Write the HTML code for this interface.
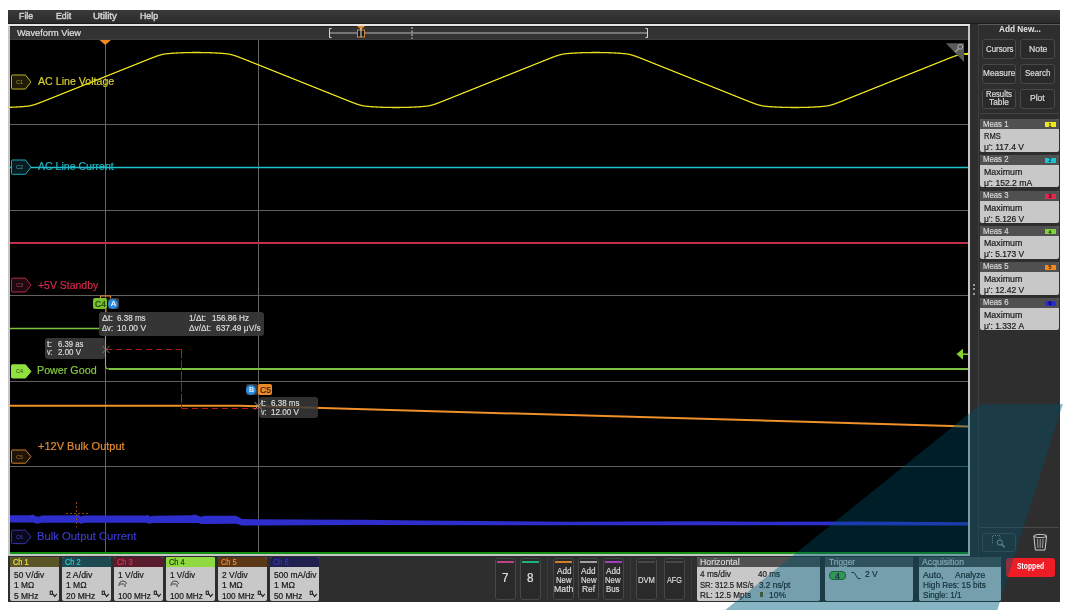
<!DOCTYPE html><html><head><meta charset="utf-8"><style>
html,body{margin:0;padding:0;}
body{width:1069px;height:610px;overflow:hidden;position:relative;background:#fff;font-family:"Liberation Sans", sans-serif;}
.a{position:absolute;}
.t{position:absolute;white-space:nowrap;line-height:1.117;transform-origin:0 0;}
.r{position:absolute;box-sizing:border-box;}
</style></head><body>

<div class="r" style="left:8px;top:10px;width:1052px;height:592px;background:#2e2e2e;"></div>
<div class="r" style="left:8px;top:10px;width:1052px;height:13px;background:linear-gradient(#3a3a3a,#2b2b2b);"></div>
<div class="r" style="left:8px;top:23px;width:1052px;height:1px;background:#1c1c1c;"></div>
<div class="t" id="t1" style="left:19.00px;top:10.88px;font-size:9.75px;color:#d4d4d4;font-weight:400;transform:scaleX(0.9034);-webkit-text-stroke:0.45px #d4d4d4;">File</div>
<div class="t" id="t2" style="left:55.60px;top:10.88px;font-size:9.75px;color:#d4d4d4;font-weight:400;transform:scaleX(0.8981);-webkit-text-stroke:0.45px #d4d4d4;">Edit</div>
<div class="t" id="t3" style="left:93.40px;top:10.88px;font-size:9.75px;color:#d4d4d4;font-weight:400;transform:scaleX(1.0066);-webkit-text-stroke:0.45px #d4d4d4;">Utility</div>
<div class="t" id="t4" style="left:140.30px;top:10.88px;font-size:9.75px;color:#d4d4d4;font-weight:400;transform:scaleX(0.8972);-webkit-text-stroke:0.45px #d4d4d4;">Help</div>
<div class="r" style="left:8px;top:24px;width:962px;height:532px;background:#c6c6c6;"></div>
<div class="r" style="left:8px;top:24px;width:962px;height:2px;background:#e4e4e4;"></div>
<div class="r" style="left:10px;top:26px;width:958px;height:14px;background:#333333;"></div>
<div class="r" style="left:10px;top:26px;width:958px;height:1px;background:#202020;"></div>
<div class="r" style="left:10px;top:39px;width:958px;height:1px;background:#3c3c3c;"></div>
<div class="t" id="t5" style="left:16.80px;top:27.19px;font-size:9.96px;color:#e0e0e0;font-weight:400;transform:scaleX(0.9256);-webkit-text-stroke:0.2px #e0e0e0;">Waveform View</div>
<div class="r" style="left:10px;top:40px;width:958px;height:512px;background:#000;"></div>
<div class="r" style="left:10px;top:552px;width:958px;height:2px;background:#138f13;"></div>
<svg class="a" style="left:0;top:0" width="1069" height="610" viewBox="0 0 1069 610">
<line x1="330" y1="33" x2="647" y2="33" stroke="#8c8c8c" stroke-width="1.6"/>
<path d="M331.5,28.5 L329.5,28.5 L329.5,37.5 L331.5,37.5" fill="none" stroke="#d8d8d8" stroke-width="1"/>
<path d="M645.5,28.5 L647.5,28.5 L647.5,37.5 L645.5,37.5" fill="none" stroke="#d8d8d8" stroke-width="1"/>
<line x1="412" y1="27" x2="412" y2="39" stroke="#d0d0d0" stroke-width="1" stroke-dasharray="2,1.5"/>
<path d="M357,26 L365,26 L361,29.5 Z" fill="#f08a22"/>
<rect x="357.5" y="30" width="7" height="7" fill="#1a1a1a" stroke="#d08a40" stroke-width="1"/>
<line x1="361" y1="28" x2="361" y2="37" stroke="#e0e0e0" stroke-width="1"/>
<line x1="10" y1="124.5" x2="968" y2="124.5" stroke="#606060" stroke-width="1"/>
<line x1="10" y1="210.5" x2="968" y2="210.5" stroke="#606060" stroke-width="1"/>
<line x1="10" y1="295.5" x2="968" y2="295.5" stroke="#606060" stroke-width="1"/>
<line x1="10" y1="381.5" x2="968" y2="381.5" stroke="#606060" stroke-width="1"/>
<line x1="10" y1="466.5" x2="968" y2="466.5" stroke="#606060" stroke-width="1"/>
<line x1="105.5" y1="40" x2="105.5" y2="552" stroke="#646464" stroke-width="1"/>
<line x1="258.5" y1="40" x2="258.5" y2="552" stroke="#646464" stroke-width="1"/>
<path d="M99.5,40 L111,40 L105.2,45 Z" fill="#f08a22"/>
<path d="M10.0,107.28 L10.5,107.26 L11.0,107.24 L11.5,107.23 L12.0,107.21 L12.5,107.19 L13.0,107.17 L13.5,107.14 L14.0,107.12 L14.5,107.10 L15.0,107.08 L15.5,107.05 L16.0,107.03 L16.5,107.00 L17.0,106.98 L17.5,106.95 L18.0,106.92 L18.5,106.89 L19.0,106.86 L19.5,106.83 L20.0,106.80 L20.5,106.77 L21.0,106.74 L21.5,106.70 L22.0,106.67 L22.5,106.63 L23.0,106.60 L23.5,106.56 L24.0,106.52 L24.5,106.47 L25.0,106.43 L25.5,106.38 L26.0,106.33 L26.5,106.28 L27.0,106.22 L27.5,106.16 L28.0,106.09 L28.5,106.02 L29.0,105.95 L29.5,105.86 L30.0,105.78 L30.5,105.68 L31.0,105.58 L31.5,105.46 L32.0,105.35 L32.5,105.22 L33.0,105.08 L33.5,104.94 L34.0,104.79 L34.5,104.64 L35.0,104.48 L35.5,104.31 L36.0,104.14 L36.5,103.97 L37.0,103.79 L37.5,103.61 L38.0,103.42 L38.5,103.23 L39.0,103.04 L39.5,102.85 L40.0,102.66 L40.5,102.47 L41.0,102.27 L41.5,102.08 L42.0,101.88 L42.5,101.68 L43.0,101.49 L43.5,101.29 L44.0,101.09 L44.5,100.89 L45.0,100.69 L45.5,100.49 L46.0,100.30 L46.5,100.10 L47.0,99.90 L47.5,99.70 L48.0,99.50 L48.5,99.30 L49.0,99.10 L49.5,98.90 L50.0,98.70 L50.5,98.50 L51.0,98.30 L51.5,98.10 L52.0,97.90 L52.5,97.70 L53.0,97.50 L53.5,97.30 L54.0,97.10 L54.5,96.90 L55.0,96.70 L55.5,96.50 L56.0,96.30 L56.5,96.10 L57.0,95.90 L57.5,95.70 L58.0,95.50 L58.5,95.30 L59.0,95.10 L59.5,94.90 L60.0,94.70 L60.5,94.50 L61.0,94.30 L61.5,94.10 L62.0,93.90 L62.5,93.70 L63.0,93.50 L63.5,93.30 L64.0,93.10 L64.5,92.90 L65.0,92.70 L65.5,92.50 L66.0,92.30 L66.5,92.10 L67.0,91.90 L67.5,91.70 L68.0,91.50 L68.5,91.30 L69.0,91.10 L69.5,90.90 L70.0,90.70 L70.5,90.50 L71.0,90.30 L71.5,90.10 L72.0,89.90 L72.5,89.70 L73.0,89.50 L73.5,89.30 L74.0,89.10 L74.5,88.90 L75.0,88.70 L75.5,88.50 L76.0,88.30 L76.5,88.10 L77.0,87.90 L77.5,87.70 L78.0,87.50 L78.5,87.30 L79.0,87.10 L79.5,86.90 L80.0,86.70 L80.5,86.50 L81.0,86.30 L81.5,86.10 L82.0,85.90 L82.5,85.70 L83.0,85.50 L83.5,85.30 L84.0,85.10 L84.5,84.90 L85.0,84.70 L85.5,84.50 L86.0,84.30 L86.5,84.10 L87.0,83.90 L87.5,83.70 L88.0,83.50 L88.5,83.30 L89.0,83.10 L89.5,82.90 L90.0,82.70 L90.5,82.50 L91.0,82.30 L91.5,82.10 L92.0,81.90 L92.5,81.70 L93.0,81.50 L93.5,81.30 L94.0,81.10 L94.5,80.90 L95.0,80.70 L95.5,80.50 L96.0,80.30 L96.5,80.10 L97.0,79.90 L97.5,79.70 L98.0,79.50 L98.5,79.30 L99.0,79.10 L99.5,78.90 L100.0,78.70 L100.5,78.50 L101.0,78.30 L101.5,78.10 L102.0,77.90 L102.5,77.70 L103.0,77.50 L103.5,77.30 L104.0,77.10 L104.5,76.90 L105.0,76.70 L105.5,76.50 L106.0,76.30 L106.5,76.10 L107.0,75.90 L107.5,75.70 L108.0,75.50 L108.5,75.30 L109.0,75.10 L109.5,74.90 L110.0,74.70 L110.5,74.50 L111.0,74.30 L111.5,74.10 L112.0,73.90 L112.5,73.70 L113.0,73.50 L113.5,73.30 L114.0,73.10 L114.5,72.90 L115.0,72.70 L115.5,72.50 L116.0,72.30 L116.5,72.10 L117.0,71.90 L117.5,71.70 L118.0,71.50 L118.5,71.30 L119.0,71.10 L119.5,70.90 L120.0,70.70 L120.5,70.50 L121.0,70.30 L121.5,70.10 L122.0,69.90 L122.5,69.70 L123.0,69.50 L123.5,69.30 L124.0,69.10 L124.5,68.90 L125.0,68.70 L125.5,68.50 L126.0,68.30 L126.5,68.10 L127.0,67.90 L127.5,67.70 L128.0,67.50 L128.5,67.30 L129.0,67.10 L129.5,66.90 L130.0,66.70 L130.5,66.50 L131.0,66.30 L131.5,66.10 L132.0,65.90 L132.5,65.70 L133.0,65.50 L133.5,65.30 L134.0,65.10 L134.5,64.90 L135.0,64.70 L135.5,64.50 L136.0,64.30 L136.5,64.10 L137.0,63.90 L137.5,63.70 L138.0,63.50 L138.5,63.30 L139.0,63.10 L139.5,62.90 L140.0,62.70 L140.5,62.50 L141.0,62.30 L141.5,62.10 L142.0,61.90 L142.5,61.70 L143.0,61.50 L143.5,61.30 L144.0,61.10 L144.5,60.90 L145.0,60.70 L145.5,60.50 L146.0,60.30 L146.5,60.10 L147.0,59.90 L147.5,59.70 L148.0,59.51 L148.5,59.31 L149.0,59.11 L149.5,58.91 L150.0,58.71 L150.5,58.51 L151.0,58.32 L151.5,58.12 L152.0,57.92 L152.5,57.73 L153.0,57.53 L153.5,57.34 L154.0,57.15 L154.5,56.96 L155.0,56.77 L155.5,56.58 L156.0,56.39 L156.5,56.21 L157.0,56.03 L157.5,55.86 L158.0,55.69 L158.5,55.52 L159.0,55.36 L159.5,55.21 L160.0,55.06 L160.5,54.92 L161.0,54.78 L161.5,54.65 L162.0,54.54 L162.5,54.42 L163.0,54.32 L163.5,54.22 L164.0,54.14 L164.5,54.05 L165.0,53.98 L165.5,53.91 L166.0,53.84 L166.5,53.78 L167.0,53.72 L167.5,53.67 L168.0,53.62 L168.5,53.57 L169.0,53.53 L169.5,53.48 L170.0,53.44 L170.5,53.40 L171.0,53.37 L171.5,53.33 L172.0,53.30 L172.5,53.26 L173.0,53.23 L173.5,53.20 L174.0,53.17 L174.5,53.14 L175.0,53.11 L175.5,53.08 L176.0,53.05 L176.5,53.02 L177.0,53.00 L177.5,52.97 L178.0,52.95 L178.5,52.92 L179.0,52.90 L179.5,52.88 L180.0,52.86 L180.5,52.83 L181.0,52.81 L181.5,52.79 L182.0,52.77 L182.5,52.76 L183.0,52.74 L183.5,52.72 L184.0,52.70 L184.5,52.69 L185.0,52.67 L185.5,52.66 L186.0,52.64 L186.5,52.63 L187.0,52.62 L187.5,52.61 L188.0,52.59 L188.5,52.58 L189.0,52.57 L189.5,52.56 L190.0,52.56 L190.5,52.55 L191.0,52.54 L191.5,52.53 L192.0,52.53 L192.5,52.52 L193.0,52.52 L193.5,52.51 L194.0,52.51 L194.5,52.51 L195.0,52.50 L195.5,52.50 L196.0,52.50 L196.5,52.50 L197.0,52.50 L197.5,52.50 L198.0,52.50 L198.5,52.51 L199.0,52.51 L199.5,52.51 L200.0,52.52 L200.5,52.52 L201.0,52.53 L201.5,52.53 L202.0,52.54 L202.5,52.55 L203.0,52.56 L203.5,52.56 L204.0,52.57 L204.5,52.58 L205.0,52.59 L205.5,52.61 L206.0,52.62 L206.5,52.63 L207.0,52.64 L207.5,52.66 L208.0,52.67 L208.5,52.69 L209.0,52.70 L209.5,52.72 L210.0,52.74 L210.5,52.76 L211.0,52.77 L211.5,52.79 L212.0,52.81 L212.5,52.83 L213.0,52.86 L213.5,52.88 L214.0,52.90 L214.5,52.92 L215.0,52.95 L215.5,52.97 L216.0,53.00 L216.5,53.02 L217.0,53.05 L217.5,53.08 L218.0,53.11 L218.5,53.14 L219.0,53.17 L219.5,53.20 L220.0,53.23 L220.5,53.26 L221.0,53.30 L221.5,53.33 L222.0,53.37 L222.5,53.40 L223.0,53.44 L223.5,53.48 L224.0,53.53 L224.5,53.57 L225.0,53.62 L225.5,53.67 L226.0,53.72 L226.5,53.78 L227.0,53.84 L227.5,53.91 L228.0,53.98 L228.5,54.05 L229.0,54.14 L229.5,54.22 L230.0,54.32 L230.5,54.42 L231.0,54.54 L231.5,54.65 L232.0,54.78 L232.5,54.92 L233.0,55.06 L233.5,55.21 L234.0,55.36 L234.5,55.52 L235.0,55.69 L235.5,55.86 L236.0,56.03 L236.5,56.21 L237.0,56.39 L237.5,56.58 L238.0,56.77 L238.5,56.96 L239.0,57.15 L239.5,57.34 L240.0,57.53 L240.5,57.73 L241.0,57.92 L241.5,58.12 L242.0,58.32 L242.5,58.51 L243.0,58.71 L243.5,58.91 L244.0,59.11 L244.5,59.31 L245.0,59.51 L245.5,59.70 L246.0,59.90 L246.5,60.10 L247.0,60.30 L247.5,60.50 L248.0,60.70 L248.5,60.90 L249.0,61.10 L249.5,61.30 L250.0,61.50 L250.5,61.70 L251.0,61.90 L251.5,62.10 L252.0,62.30 L252.5,62.50 L253.0,62.70 L253.5,62.90 L254.0,63.10 L254.5,63.30 L255.0,63.50 L255.5,63.70 L256.0,63.90 L256.5,64.10 L257.0,64.30 L257.5,64.50 L258.0,64.70 L258.5,64.90 L259.0,65.10 L259.5,65.30 L260.0,65.50 L260.5,65.70 L261.0,65.90 L261.5,66.10 L262.0,66.30 L262.5,66.50 L263.0,66.70 L263.5,66.90 L264.0,67.10 L264.5,67.30 L265.0,67.50 L265.5,67.70 L266.0,67.90 L266.5,68.10 L267.0,68.30 L267.5,68.50 L268.0,68.70 L268.5,68.90 L269.0,69.10 L269.5,69.30 L270.0,69.50 L270.5,69.70 L271.0,69.90 L271.5,70.10 L272.0,70.30 L272.5,70.50 L273.0,70.70 L273.5,70.90 L274.0,71.10 L274.5,71.30 L275.0,71.50 L275.5,71.70 L276.0,71.90 L276.5,72.10 L277.0,72.30 L277.5,72.50 L278.0,72.70 L278.5,72.90 L279.0,73.10 L279.5,73.30 L280.0,73.50 L280.5,73.70 L281.0,73.90 L281.5,74.10 L282.0,74.30 L282.5,74.50 L283.0,74.70 L283.5,74.90 L284.0,75.10 L284.5,75.30 L285.0,75.50 L285.5,75.70 L286.0,75.90 L286.5,76.10 L287.0,76.30 L287.5,76.50 L288.0,76.70 L288.5,76.90 L289.0,77.10 L289.5,77.30 L290.0,77.50 L290.5,77.70 L291.0,77.90 L291.5,78.10 L292.0,78.30 L292.5,78.50 L293.0,78.70 L293.5,78.90 L294.0,79.10 L294.5,79.30 L295.0,79.50 L295.5,79.70 L296.0,79.90 L296.5,80.10 L297.0,80.30 L297.5,80.50 L298.0,80.70 L298.5,80.90 L299.0,81.10 L299.5,81.30 L300.0,81.50 L300.5,81.70 L301.0,81.90 L301.5,82.10 L302.0,82.30 L302.5,82.50 L303.0,82.70 L303.5,82.90 L304.0,83.10 L304.5,83.30 L305.0,83.50 L305.5,83.70 L306.0,83.90 L306.5,84.10 L307.0,84.30 L307.5,84.50 L308.0,84.70 L308.5,84.90 L309.0,85.10 L309.5,85.30 L310.0,85.50 L310.5,85.70 L311.0,85.90 L311.5,86.10 L312.0,86.30 L312.5,86.50 L313.0,86.70 L313.5,86.90 L314.0,87.10 L314.5,87.30 L315.0,87.50 L315.5,87.70 L316.0,87.90 L316.5,88.10 L317.0,88.30 L317.5,88.50 L318.0,88.70 L318.5,88.90 L319.0,89.10 L319.5,89.30 L320.0,89.50 L320.5,89.70 L321.0,89.90 L321.5,90.10 L322.0,90.30 L322.5,90.50 L323.0,90.70 L323.5,90.90 L324.0,91.10 L324.5,91.30 L325.0,91.50 L325.5,91.70 L326.0,91.90 L326.5,92.10 L327.0,92.30 L327.5,92.50 L328.0,92.70 L328.5,92.90 L329.0,93.10 L329.5,93.30 L330.0,93.50 L330.5,93.70 L331.0,93.90 L331.5,94.10 L332.0,94.30 L332.5,94.50 L333.0,94.70 L333.5,94.90 L334.0,95.10 L334.5,95.30 L335.0,95.50 L335.5,95.70 L336.0,95.90 L336.5,96.10 L337.0,96.30 L337.5,96.50 L338.0,96.70 L338.5,96.90 L339.0,97.10 L339.5,97.30 L340.0,97.50 L340.5,97.70 L341.0,97.90 L341.5,98.10 L342.0,98.30 L342.5,98.50 L343.0,98.70 L343.5,98.90 L344.0,99.10 L344.5,99.30 L345.0,99.50 L345.5,99.70 L346.0,99.90 L346.5,100.10 L347.0,100.30 L347.5,100.49 L348.0,100.69 L348.5,100.89 L349.0,101.09 L349.5,101.29 L350.0,101.49 L350.5,101.68 L351.0,101.88 L351.5,102.08 L352.0,102.27 L352.5,102.47 L353.0,102.66 L353.5,102.85 L354.0,103.04 L354.5,103.23 L355.0,103.42 L355.5,103.61 L356.0,103.79 L356.5,103.97 L357.0,104.14 L357.5,104.31 L358.0,104.48 L358.5,104.64 L359.0,104.79 L359.5,104.94 L360.0,105.08 L360.5,105.22 L361.0,105.35 L361.5,105.46 L362.0,105.58 L362.5,105.68 L363.0,105.78 L363.5,105.86 L364.0,105.95 L364.5,106.02 L365.0,106.09 L365.5,106.16 L366.0,106.22 L366.5,106.28 L367.0,106.33 L367.5,106.38 L368.0,106.43 L368.5,106.47 L369.0,106.52 L369.5,106.56 L370.0,106.60 L370.5,106.63 L371.0,106.67 L371.5,106.70 L372.0,106.74 L372.5,106.77 L373.0,106.80 L373.5,106.83 L374.0,106.86 L374.5,106.89 L375.0,106.92 L375.5,106.95 L376.0,106.98 L376.5,107.00 L377.0,107.03 L377.5,107.05 L378.0,107.08 L378.5,107.10 L379.0,107.12 L379.5,107.14 L380.0,107.17 L380.5,107.19 L381.0,107.21 L381.5,107.23 L382.0,107.24 L382.5,107.26 L383.0,107.28 L383.5,107.30 L384.0,107.31 L384.5,107.33 L385.0,107.34 L385.5,107.36 L386.0,107.37 L386.5,107.38 L387.0,107.39 L387.5,107.41 L388.0,107.42 L388.5,107.43 L389.0,107.44 L389.5,107.44 L390.0,107.45 L390.5,107.46 L391.0,107.47 L391.5,107.47 L392.0,107.48 L392.5,107.48 L393.0,107.49 L393.5,107.49 L394.0,107.49 L394.5,107.50 L395.0,107.50 L395.5,107.50 L396.0,107.50 L396.5,107.50 L397.0,107.50 L397.5,107.50 L398.0,107.49 L398.5,107.49 L399.0,107.49 L399.5,107.48 L400.0,107.48 L400.5,107.47 L401.0,107.47 L401.5,107.46 L402.0,107.45 L402.5,107.44 L403.0,107.44 L403.5,107.43 L404.0,107.42 L404.5,107.41 L405.0,107.39 L405.5,107.38 L406.0,107.37 L406.5,107.36 L407.0,107.34 L407.5,107.33 L408.0,107.31 L408.5,107.30 L409.0,107.28 L409.5,107.26 L410.0,107.24 L410.5,107.23 L411.0,107.21 L411.5,107.19 L412.0,107.17 L412.5,107.14 L413.0,107.12 L413.5,107.10 L414.0,107.08 L414.5,107.05 L415.0,107.03 L415.5,107.00 L416.0,106.98 L416.5,106.95 L417.0,106.92 L417.5,106.89 L418.0,106.86 L418.5,106.83 L419.0,106.80 L419.5,106.77 L420.0,106.74 L420.5,106.70 L421.0,106.67 L421.5,106.63 L422.0,106.60 L422.5,106.56 L423.0,106.52 L423.5,106.47 L424.0,106.43 L424.5,106.38 L425.0,106.33 L425.5,106.28 L426.0,106.22 L426.5,106.16 L427.0,106.09 L427.5,106.02 L428.0,105.95 L428.5,105.86 L429.0,105.78 L429.5,105.68 L430.0,105.58 L430.5,105.46 L431.0,105.35 L431.5,105.22 L432.0,105.08 L432.5,104.94 L433.0,104.79 L433.5,104.64 L434.0,104.48 L434.5,104.31 L435.0,104.14 L435.5,103.97 L436.0,103.79 L436.5,103.61 L437.0,103.42 L437.5,103.23 L438.0,103.04 L438.5,102.85 L439.0,102.66 L439.5,102.47 L440.0,102.27 L440.5,102.08 L441.0,101.88 L441.5,101.68 L442.0,101.49 L442.5,101.29 L443.0,101.09 L443.5,100.89 L444.0,100.69 L444.5,100.49 L445.0,100.30 L445.5,100.10 L446.0,99.90 L446.5,99.70 L447.0,99.50 L447.5,99.30 L448.0,99.10 L448.5,98.90 L449.0,98.70 L449.5,98.50 L450.0,98.30 L450.5,98.10 L451.0,97.90 L451.5,97.70 L452.0,97.50 L452.5,97.30 L453.0,97.10 L453.5,96.90 L454.0,96.70 L454.5,96.50 L455.0,96.30 L455.5,96.10 L456.0,95.90 L456.5,95.70 L457.0,95.50 L457.5,95.30 L458.0,95.10 L458.5,94.90 L459.0,94.70 L459.5,94.50 L460.0,94.30 L460.5,94.10 L461.0,93.90 L461.5,93.70 L462.0,93.50 L462.5,93.30 L463.0,93.10 L463.5,92.90 L464.0,92.70 L464.5,92.50 L465.0,92.30 L465.5,92.10 L466.0,91.90 L466.5,91.70 L467.0,91.50 L467.5,91.30 L468.0,91.10 L468.5,90.90 L469.0,90.70 L469.5,90.50 L470.0,90.30 L470.5,90.10 L471.0,89.90 L471.5,89.70 L472.0,89.50 L472.5,89.30 L473.0,89.10 L473.5,88.90 L474.0,88.70 L474.5,88.50 L475.0,88.30 L475.5,88.10 L476.0,87.90 L476.5,87.70 L477.0,87.50 L477.5,87.30 L478.0,87.10 L478.5,86.90 L479.0,86.70 L479.5,86.50 L480.0,86.30 L480.5,86.10 L481.0,85.90 L481.5,85.70 L482.0,85.50 L482.5,85.30 L483.0,85.10 L483.5,84.90 L484.0,84.70 L484.5,84.50 L485.0,84.30 L485.5,84.10 L486.0,83.90 L486.5,83.70 L487.0,83.50 L487.5,83.30 L488.0,83.10 L488.5,82.90 L489.0,82.70 L489.5,82.50 L490.0,82.30 L490.5,82.10 L491.0,81.90 L491.5,81.70 L492.0,81.50 L492.5,81.30 L493.0,81.10 L493.5,80.90 L494.0,80.70 L494.5,80.50 L495.0,80.30 L495.5,80.10 L496.0,79.90 L496.5,79.70 L497.0,79.50 L497.5,79.30 L498.0,79.10 L498.5,78.90 L499.0,78.70 L499.5,78.50 L500.0,78.30 L500.5,78.10 L501.0,77.90 L501.5,77.70 L502.0,77.50 L502.5,77.30 L503.0,77.10 L503.5,76.90 L504.0,76.70 L504.5,76.50 L505.0,76.30 L505.5,76.10 L506.0,75.90 L506.5,75.70 L507.0,75.50 L507.5,75.30 L508.0,75.10 L508.5,74.90 L509.0,74.70 L509.5,74.50 L510.0,74.30 L510.5,74.10 L511.0,73.90 L511.5,73.70 L512.0,73.50 L512.5,73.30 L513.0,73.10 L513.5,72.90 L514.0,72.70 L514.5,72.50 L515.0,72.30 L515.5,72.10 L516.0,71.90 L516.5,71.70 L517.0,71.50 L517.5,71.30 L518.0,71.10 L518.5,70.90 L519.0,70.70 L519.5,70.50 L520.0,70.30 L520.5,70.10 L521.0,69.90 L521.5,69.70 L522.0,69.50 L522.5,69.30 L523.0,69.10 L523.5,68.90 L524.0,68.70 L524.5,68.50 L525.0,68.30 L525.5,68.10 L526.0,67.90 L526.5,67.70 L527.0,67.50 L527.5,67.30 L528.0,67.10 L528.5,66.90 L529.0,66.70 L529.5,66.50 L530.0,66.30 L530.5,66.10 L531.0,65.90 L531.5,65.70 L532.0,65.50 L532.5,65.30 L533.0,65.10 L533.5,64.90 L534.0,64.70 L534.5,64.50 L535.0,64.30 L535.5,64.10 L536.0,63.90 L536.5,63.70 L537.0,63.50 L537.5,63.30 L538.0,63.10 L538.5,62.90 L539.0,62.70 L539.5,62.50 L540.0,62.30 L540.5,62.10 L541.0,61.90 L541.5,61.70 L542.0,61.50 L542.5,61.30 L543.0,61.10 L543.5,60.90 L544.0,60.70 L544.5,60.50 L545.0,60.30 L545.5,60.10 L546.0,59.90 L546.5,59.70 L547.0,59.51 L547.5,59.31 L548.0,59.11 L548.5,58.91 L549.0,58.71 L549.5,58.51 L550.0,58.32 L550.5,58.12 L551.0,57.92 L551.5,57.73 L552.0,57.53 L552.5,57.34 L553.0,57.15 L553.5,56.96 L554.0,56.77 L554.5,56.58 L555.0,56.39 L555.5,56.21 L556.0,56.03 L556.5,55.86 L557.0,55.69 L557.5,55.52 L558.0,55.36 L558.5,55.21 L559.0,55.06 L559.5,54.92 L560.0,54.78 L560.5,54.65 L561.0,54.54 L561.5,54.42 L562.0,54.32 L562.5,54.22 L563.0,54.14 L563.5,54.05 L564.0,53.98 L564.5,53.91 L565.0,53.84 L565.5,53.78 L566.0,53.72 L566.5,53.67 L567.0,53.62 L567.5,53.57 L568.0,53.53 L568.5,53.48 L569.0,53.44 L569.5,53.40 L570.0,53.37 L570.5,53.33 L571.0,53.30 L571.5,53.26 L572.0,53.23 L572.5,53.20 L573.0,53.17 L573.5,53.14 L574.0,53.11 L574.5,53.08 L575.0,53.05 L575.5,53.02 L576.0,53.00 L576.5,52.97 L577.0,52.95 L577.5,52.92 L578.0,52.90 L578.5,52.88 L579.0,52.86 L579.5,52.83 L580.0,52.81 L580.5,52.79 L581.0,52.77 L581.5,52.76 L582.0,52.74 L582.5,52.72 L583.0,52.70 L583.5,52.69 L584.0,52.67 L584.5,52.66 L585.0,52.64 L585.5,52.63 L586.0,52.62 L586.5,52.61 L587.0,52.59 L587.5,52.58 L588.0,52.57 L588.5,52.56 L589.0,52.56 L589.5,52.55 L590.0,52.54 L590.5,52.53 L591.0,52.53 L591.5,52.52 L592.0,52.52 L592.5,52.51 L593.0,52.51 L593.5,52.51 L594.0,52.50 L594.5,52.50 L595.0,52.50 L595.5,52.50 L596.0,52.50 L596.5,52.50 L597.0,52.50 L597.5,52.51 L598.0,52.51 L598.5,52.51 L599.0,52.52 L599.5,52.52 L600.0,52.53 L600.5,52.53 L601.0,52.54 L601.5,52.55 L602.0,52.56 L602.5,52.56 L603.0,52.57 L603.5,52.58 L604.0,52.59 L604.5,52.61 L605.0,52.62 L605.5,52.63 L606.0,52.64 L606.5,52.66 L607.0,52.67 L607.5,52.69 L608.0,52.70 L608.5,52.72 L609.0,52.74 L609.5,52.76 L610.0,52.77 L610.5,52.79 L611.0,52.81 L611.5,52.83 L612.0,52.86 L612.5,52.88 L613.0,52.90 L613.5,52.92 L614.0,52.95 L614.5,52.97 L615.0,53.00 L615.5,53.02 L616.0,53.05 L616.5,53.08 L617.0,53.11 L617.5,53.14 L618.0,53.17 L618.5,53.20 L619.0,53.23 L619.5,53.26 L620.0,53.30 L620.5,53.33 L621.0,53.37 L621.5,53.40 L622.0,53.44 L622.5,53.48 L623.0,53.53 L623.5,53.57 L624.0,53.62 L624.5,53.67 L625.0,53.72 L625.5,53.78 L626.0,53.84 L626.5,53.91 L627.0,53.98 L627.5,54.05 L628.0,54.14 L628.5,54.22 L629.0,54.32 L629.5,54.42 L630.0,54.54 L630.5,54.65 L631.0,54.78 L631.5,54.92 L632.0,55.06 L632.5,55.21 L633.0,55.36 L633.5,55.52 L634.0,55.69 L634.5,55.86 L635.0,56.03 L635.5,56.21 L636.0,56.39 L636.5,56.58 L637.0,56.77 L637.5,56.96 L638.0,57.15 L638.5,57.34 L639.0,57.53 L639.5,57.73 L640.0,57.92 L640.5,58.12 L641.0,58.32 L641.5,58.51 L642.0,58.71 L642.5,58.91 L643.0,59.11 L643.5,59.31 L644.0,59.51 L644.5,59.70 L645.0,59.90 L645.5,60.10 L646.0,60.30 L646.5,60.50 L647.0,60.70 L647.5,60.90 L648.0,61.10 L648.5,61.30 L649.0,61.50 L649.5,61.70 L650.0,61.90 L650.5,62.10 L651.0,62.30 L651.5,62.50 L652.0,62.70 L652.5,62.90 L653.0,63.10 L653.5,63.30 L654.0,63.50 L654.5,63.70 L655.0,63.90 L655.5,64.10 L656.0,64.30 L656.5,64.50 L657.0,64.70 L657.5,64.90 L658.0,65.10 L658.5,65.30 L659.0,65.50 L659.5,65.70 L660.0,65.90 L660.5,66.10 L661.0,66.30 L661.5,66.50 L662.0,66.70 L662.5,66.90 L663.0,67.10 L663.5,67.30 L664.0,67.50 L664.5,67.70 L665.0,67.90 L665.5,68.10 L666.0,68.30 L666.5,68.50 L667.0,68.70 L667.5,68.90 L668.0,69.10 L668.5,69.30 L669.0,69.50 L669.5,69.70 L670.0,69.90 L670.5,70.10 L671.0,70.30 L671.5,70.50 L672.0,70.70 L672.5,70.90 L673.0,71.10 L673.5,71.30 L674.0,71.50 L674.5,71.70 L675.0,71.90 L675.5,72.10 L676.0,72.30 L676.5,72.50 L677.0,72.70 L677.5,72.90 L678.0,73.10 L678.5,73.30 L679.0,73.50 L679.5,73.70 L680.0,73.90 L680.5,74.10 L681.0,74.30 L681.5,74.50 L682.0,74.70 L682.5,74.90 L683.0,75.10 L683.5,75.30 L684.0,75.50 L684.5,75.70 L685.0,75.90 L685.5,76.10 L686.0,76.30 L686.5,76.50 L687.0,76.70 L687.5,76.90 L688.0,77.10 L688.5,77.30 L689.0,77.50 L689.5,77.70 L690.0,77.90 L690.5,78.10 L691.0,78.30 L691.5,78.50 L692.0,78.70 L692.5,78.90 L693.0,79.10 L693.5,79.30 L694.0,79.50 L694.5,79.70 L695.0,79.90 L695.5,80.10 L696.0,80.30 L696.5,80.50 L697.0,80.70 L697.5,80.90 L698.0,81.10 L698.5,81.30 L699.0,81.50 L699.5,81.70 L700.0,81.90 L700.5,82.10 L701.0,82.30 L701.5,82.50 L702.0,82.70 L702.5,82.90 L703.0,83.10 L703.5,83.30 L704.0,83.50 L704.5,83.70 L705.0,83.90 L705.5,84.10 L706.0,84.30 L706.5,84.50 L707.0,84.70 L707.5,84.90 L708.0,85.10 L708.5,85.30 L709.0,85.50 L709.5,85.70 L710.0,85.90 L710.5,86.10 L711.0,86.30 L711.5,86.50 L712.0,86.70 L712.5,86.90 L713.0,87.10 L713.5,87.30 L714.0,87.50 L714.5,87.70 L715.0,87.90 L715.5,88.10 L716.0,88.30 L716.5,88.50 L717.0,88.70 L717.5,88.90 L718.0,89.10 L718.5,89.30 L719.0,89.50 L719.5,89.70 L720.0,89.90 L720.5,90.10 L721.0,90.30 L721.5,90.50 L722.0,90.70 L722.5,90.90 L723.0,91.10 L723.5,91.30 L724.0,91.50 L724.5,91.70 L725.0,91.90 L725.5,92.10 L726.0,92.30 L726.5,92.50 L727.0,92.70 L727.5,92.90 L728.0,93.10 L728.5,93.30 L729.0,93.50 L729.5,93.70 L730.0,93.90 L730.5,94.10 L731.0,94.30 L731.5,94.50 L732.0,94.70 L732.5,94.90 L733.0,95.10 L733.5,95.30 L734.0,95.50 L734.5,95.70 L735.0,95.90 L735.5,96.10 L736.0,96.30 L736.5,96.50 L737.0,96.70 L737.5,96.90 L738.0,97.10 L738.5,97.30 L739.0,97.50 L739.5,97.70 L740.0,97.90 L740.5,98.10 L741.0,98.30 L741.5,98.50 L742.0,98.70 L742.5,98.90 L743.0,99.10 L743.5,99.30 L744.0,99.50 L744.5,99.70 L745.0,99.90 L745.5,100.10 L746.0,100.30 L746.5,100.49 L747.0,100.69 L747.5,100.89 L748.0,101.09 L748.5,101.29 L749.0,101.49 L749.5,101.68 L750.0,101.88 L750.5,102.08 L751.0,102.27 L751.5,102.47 L752.0,102.66 L752.5,102.85 L753.0,103.04 L753.5,103.23 L754.0,103.42 L754.5,103.61 L755.0,103.79 L755.5,103.97 L756.0,104.14 L756.5,104.31 L757.0,104.48 L757.5,104.64 L758.0,104.79 L758.5,104.94 L759.0,105.08 L759.5,105.22 L760.0,105.35 L760.5,105.46 L761.0,105.58 L761.5,105.68 L762.0,105.78 L762.5,105.86 L763.0,105.95 L763.5,106.02 L764.0,106.09 L764.5,106.16 L765.0,106.22 L765.5,106.28 L766.0,106.33 L766.5,106.38 L767.0,106.43 L767.5,106.47 L768.0,106.52 L768.5,106.56 L769.0,106.60 L769.5,106.63 L770.0,106.67 L770.5,106.70 L771.0,106.74 L771.5,106.77 L772.0,106.80 L772.5,106.83 L773.0,106.86 L773.5,106.89 L774.0,106.92 L774.5,106.95 L775.0,106.98 L775.5,107.00 L776.0,107.03 L776.5,107.05 L777.0,107.08 L777.5,107.10 L778.0,107.12 L778.5,107.14 L779.0,107.17 L779.5,107.19 L780.0,107.21 L780.5,107.23 L781.0,107.24 L781.5,107.26 L782.0,107.28 L782.5,107.30 L783.0,107.31 L783.5,107.33 L784.0,107.34 L784.5,107.36 L785.0,107.37 L785.5,107.38 L786.0,107.39 L786.5,107.41 L787.0,107.42 L787.5,107.43 L788.0,107.44 L788.5,107.44 L789.0,107.45 L789.5,107.46 L790.0,107.47 L790.5,107.47 L791.0,107.48 L791.5,107.48 L792.0,107.49 L792.5,107.49 L793.0,107.49 L793.5,107.50 L794.0,107.50 L794.5,107.50 L795.0,107.50 L795.5,107.50 L796.0,107.50 L796.5,107.50 L797.0,107.49 L797.5,107.49 L798.0,107.49 L798.5,107.48 L799.0,107.48 L799.5,107.47 L800.0,107.47 L800.5,107.46 L801.0,107.45 L801.5,107.44 L802.0,107.44 L802.5,107.43 L803.0,107.42 L803.5,107.41 L804.0,107.39 L804.5,107.38 L805.0,107.37 L805.5,107.36 L806.0,107.34 L806.5,107.33 L807.0,107.31 L807.5,107.30 L808.0,107.28 L808.5,107.26 L809.0,107.24 L809.5,107.23 L810.0,107.21 L810.5,107.19 L811.0,107.17 L811.5,107.14 L812.0,107.12 L812.5,107.10 L813.0,107.08 L813.5,107.05 L814.0,107.03 L814.5,107.00 L815.0,106.98 L815.5,106.95 L816.0,106.92 L816.5,106.89 L817.0,106.86 L817.5,106.83 L818.0,106.80 L818.5,106.77 L819.0,106.74 L819.5,106.70 L820.0,106.67 L820.5,106.63 L821.0,106.60 L821.5,106.56 L822.0,106.52 L822.5,106.47 L823.0,106.43 L823.5,106.38 L824.0,106.33 L824.5,106.28 L825.0,106.22 L825.5,106.16 L826.0,106.09 L826.5,106.02 L827.0,105.95 L827.5,105.86 L828.0,105.78 L828.5,105.68 L829.0,105.58 L829.5,105.46 L830.0,105.35 L830.5,105.22 L831.0,105.08 L831.5,104.94 L832.0,104.79 L832.5,104.64 L833.0,104.48 L833.5,104.31 L834.0,104.14 L834.5,103.97 L835.0,103.79 L835.5,103.61 L836.0,103.42 L836.5,103.23 L837.0,103.04 L837.5,102.85 L838.0,102.66 L838.5,102.47 L839.0,102.27 L839.5,102.08 L840.0,101.88 L840.5,101.68 L841.0,101.49 L841.5,101.29 L842.0,101.09 L842.5,100.89 L843.0,100.69 L843.5,100.49 L844.0,100.30 L844.5,100.10 L845.0,99.90 L845.5,99.70 L846.0,99.50 L846.5,99.30 L847.0,99.10 L847.5,98.90 L848.0,98.70 L848.5,98.50 L849.0,98.30 L849.5,98.10 L850.0,97.90 L850.5,97.70 L851.0,97.50 L851.5,97.30 L852.0,97.10 L852.5,96.90 L853.0,96.70 L853.5,96.50 L854.0,96.30 L854.5,96.10 L855.0,95.90 L855.5,95.70 L856.0,95.50 L856.5,95.30 L857.0,95.10 L857.5,94.90 L858.0,94.70 L858.5,94.50 L859.0,94.30 L859.5,94.10 L860.0,93.90 L860.5,93.70 L861.0,93.50 L861.5,93.30 L862.0,93.10 L862.5,92.90 L863.0,92.70 L863.5,92.50 L864.0,92.30 L864.5,92.10 L865.0,91.90 L865.5,91.70 L866.0,91.50 L866.5,91.30 L867.0,91.10 L867.5,90.90 L868.0,90.70 L868.5,90.50 L869.0,90.30 L869.5,90.10 L870.0,89.90 L870.5,89.70 L871.0,89.50 L871.5,89.30 L872.0,89.10 L872.5,88.90 L873.0,88.70 L873.5,88.50 L874.0,88.30 L874.5,88.10 L875.0,87.90 L875.5,87.70 L876.0,87.50 L876.5,87.30 L877.0,87.10 L877.5,86.90 L878.0,86.70 L878.5,86.50 L879.0,86.30 L879.5,86.10 L880.0,85.90 L880.5,85.70 L881.0,85.50 L881.5,85.30 L882.0,85.10 L882.5,84.90 L883.0,84.70 L883.5,84.50 L884.0,84.30 L884.5,84.10 L885.0,83.90 L885.5,83.70 L886.0,83.50 L886.5,83.30 L887.0,83.10 L887.5,82.90 L888.0,82.70 L888.5,82.50 L889.0,82.30 L889.5,82.10 L890.0,81.90 L890.5,81.70 L891.0,81.50 L891.5,81.30 L892.0,81.10 L892.5,80.90 L893.0,80.70 L893.5,80.50 L894.0,80.30 L894.5,80.10 L895.0,79.90 L895.5,79.70 L896.0,79.50 L896.5,79.30 L897.0,79.10 L897.5,78.90 L898.0,78.70 L898.5,78.50 L899.0,78.30 L899.5,78.10 L900.0,77.90 L900.5,77.70 L901.0,77.50 L901.5,77.30 L902.0,77.10 L902.5,76.90 L903.0,76.70 L903.5,76.50 L904.0,76.30 L904.5,76.10 L905.0,75.90 L905.5,75.70 L906.0,75.50 L906.5,75.30 L907.0,75.10 L907.5,74.90 L908.0,74.70 L908.5,74.50 L909.0,74.30 L909.5,74.10 L910.0,73.90 L910.5,73.70 L911.0,73.50 L911.5,73.30 L912.0,73.10 L912.5,72.90 L913.0,72.70 L913.5,72.50 L914.0,72.30 L914.5,72.10 L915.0,71.90 L915.5,71.70 L916.0,71.50 L916.5,71.30 L917.0,71.10 L917.5,70.90 L918.0,70.70 L918.5,70.50 L919.0,70.30 L919.5,70.10 L920.0,69.90 L920.5,69.70 L921.0,69.50 L921.5,69.30 L922.0,69.10 L922.5,68.90 L923.0,68.70 L923.5,68.50 L924.0,68.30 L924.5,68.10 L925.0,67.90 L925.5,67.70 L926.0,67.50 L926.5,67.30 L927.0,67.10 L927.5,66.90 L928.0,66.70 L928.5,66.50 L929.0,66.30 L929.5,66.10 L930.0,65.90 L930.5,65.70 L931.0,65.50 L931.5,65.30 L932.0,65.10 L932.5,64.90 L933.0,64.70 L933.5,64.50 L934.0,64.30 L934.5,64.10 L935.0,63.90 L935.5,63.70 L936.0,63.50 L936.5,63.30 L937.0,63.10 L937.5,62.90 L938.0,62.70 L938.5,62.50 L939.0,62.30 L939.5,62.10 L940.0,61.90 L940.5,61.70 L941.0,61.50 L941.5,61.30 L942.0,61.10 L942.5,60.90 L943.0,60.70 L943.5,60.50 L944.0,60.30 L944.5,60.10 L945.0,59.90 L945.5,59.70 L946.0,59.51 L946.5,59.31 L947.0,59.11 L947.5,58.91 L948.0,58.71 L948.5,58.51 L949.0,58.32 L949.5,58.12 L950.0,57.92 L950.5,57.73 L951.0,57.53 L951.5,57.34 L952.0,57.15 L952.5,56.96 L953.0,56.77 L953.5,56.58 L954.0,56.39 L954.5,56.21 L955.0,56.03 L955.5,55.86 L956.0,55.69 L956.5,55.52 L957.0,55.36 L957.5,55.21 L958.0,55.06 L958.5,54.92 L959.0,54.78 L959.5,54.65 L960.0,54.54 L960.5,54.42 L961.0,54.32 L961.5,54.22 L962.0,54.14 L962.5,54.05 L963.0,53.98 L963.5,53.91 L964.0,53.84 L964.5,53.78 L965.0,53.72 L965.5,53.67 L966.0,53.62 L966.5,53.57 L967.0,53.53 L967.5,53.48 L968.0,53.44" fill="none" stroke="#e8e01a" stroke-width="1.3"/>
<line x1="964.5" y1="54.5" x2="968" y2="54.5" stroke="#e8e01a" stroke-width="1"/>
<line x1="10" y1="167.5" x2="968" y2="167.5" stroke="#1ec2cc" stroke-width="1.3"/>
<line x1="10" y1="243" x2="968" y2="243" stroke="#c0304c" stroke-width="2"/>
<path d="M10,328.5 L105.5,328.5" fill="none" stroke="#7cc040" stroke-width="1.6"/><path d="M105.5,328.5 L105.5,366 Q105.5,369 108.5,369" fill="none" stroke="#7cc040" stroke-width="1.1"/><path d="M108.5,369 L968,369" fill="none" stroke="#7cc040" stroke-width="1.8"/>
<path d="M10,405.7 L240,405.7 L968,426.4" fill="none" stroke="#f0902a" stroke-width="2"/>
<path d="M10,515.3 L30,515.2 L33,514.6 L36,516.2 L38.5,516.8 L42,515.6 L76,515.3 L79,514.8 L81,516.5 L84,515.5 L145,515.6 L148,514.9 L150,516.4 L153,515.7 L192,515.3 L195,514.4 L201,516.8 L205,515.8 L236,515.8 L242,519.1 L300,519.5 L360,519.7 L420,520.5 L570,521.7 L700,521.2 L770,521.7 L860,521.5 L968,522.3 L968,525.5 L770,525.2 L570,525.2 L360,525 L242,525.6 L236,523.7 L201,524 L198,523 L153,522.9 L149,523.8 L146,522.8 L85,522.8 L81,523.8 L78,522.7 L42,522.8 L37,523.8 L33,522.6 L10,522.6 Z" fill="#2e2ecc"/>
<line x1="76.5" y1="502" x2="76.5" y2="527.5" stroke="#8a4a18" stroke-width="1" stroke-dasharray="2,2"/>
<line x1="66" y1="513.5" x2="90" y2="513.5" stroke="#8a4a18" stroke-width="1" stroke-dasharray="2,2"/>
<path d="M945.8,43.3 L964,43.3 L964,62 Z" fill="#5a5a5a"/>
<circle cx="960.3" cy="46.8" r="2.4" fill="none" stroke="#b0b0b0" stroke-width="1"/>
<line x1="958.5" y1="48.6" x2="955.3" y2="51.8" stroke="#b0b0b0" stroke-width="1.2"/>
<path d="M956.5,354 L963,348.8 L963,359.7 Z" fill="#88d030"/><line x1="962" y1="354.2" x2="968" y2="354.2" stroke="#88d030" stroke-width="1.5"/>
<path d="M106,349.5 L181.5,349.5" fill="none" stroke="#b01818" stroke-width="1" stroke-dasharray="6,4"/><path d="M181.5,349.5 L181.5,408.5" fill="none" stroke="#b01818" stroke-width="1" stroke-dasharray="9,2"/><path d="M182,408.5 L258,408.5" fill="none" stroke="#b01818" stroke-width="1" stroke-dasharray="6,4"/>
<path d="M10,408.2 L258,408.2" fill="none" stroke="#c01818" stroke-width="1" stroke-dasharray="4,3" opacity="0"/>
<path d="M11.5,76 Q11.5,75 12.5,75 L25.5,75 L31,82.0 L25.5,89 L12.5,89 Q11.5,89 11.5,88 Z" fill="#1e1c06" stroke="#bdb524" stroke-width="1"/><text x="19.5" y="84.0" font-size="5.5" fill="#9a9430" text-anchor="middle" font-family="Liberation Sans">C1</text>
<path d="M11.5,161 Q11.5,160 12.5,160 L25.5,160 L31,167.15 L25.5,174.3 L12.5,174.3 Q11.5,174.3 11.5,173.3 Z" fill="#061c20" stroke="#1fa8b8" stroke-width="1"/><text x="19.5" y="169.15" font-size="5.5" fill="#5aa0a8" text-anchor="middle" font-family="Liberation Sans">C2</text>
<path d="M11.5,279.2 Q11.5,278.2 12.5,278.2 L25.5,278.2 L31,285.1 L25.5,292 L12.5,292 Q11.5,292 11.5,291 Z" fill="#200810" stroke="#b82848" stroke-width="1"/><text x="19.5" y="287.1" font-size="5.5" fill="#a04a5a" text-anchor="middle" font-family="Liberation Sans">C3</text>
<path d="M11.5,365.8 Q11.5,364.8 12.5,364.8 L25.5,364.8 L31,371.4 L25.5,378 L12.5,378 Q11.5,378 11.5,377 Z" fill="#90e040" stroke="#90e040" stroke-width="1"/><text x="19.5" y="373.4" font-size="5.5" fill="#2a4a10" text-anchor="middle" font-family="Liberation Sans">C4</text>
<path d="M11.5,451 Q11.5,450 12.5,450 L25.5,450 L31,456.6 L25.5,463.2 L12.5,463.2 Q11.5,463.2 11.5,462.2 Z" fill="#201408" stroke="#d08028" stroke-width="1"/><text x="19.5" y="458.6" font-size="5.5" fill="#a06a30" text-anchor="middle" font-family="Liberation Sans">C5</text>
<path d="M11.5,531.2 Q11.5,530.2 12.5,530.2 L25.5,530.2 L31,536.9000000000001 L25.5,543.6 L12.5,543.6 Q11.5,543.6 11.5,542.6 Z" fill="#080820" stroke="#3434a8" stroke-width="1"/><text x="19.5" y="538.9000000000001" font-size="5.5" fill="#4a4aa0" text-anchor="middle" font-family="Liberation Sans">C6</text>
</svg>
<div class="t" id="t6" style="left:37.60px;top:74.25px;font-size:11.66px;color:#d8d030;font-weight:400;transform:scaleX(0.9126);-webkit-text-stroke:0.2px #d8d030;">AC Line Voltage</div>
<div class="t" id="t7" style="left:37.60px;top:159.45px;font-size:11.66px;color:#20b8c8;font-weight:400;transform:scaleX(0.9057);-webkit-text-stroke:0.2px #20b8c8;">AC Line Current</div>
<div class="t" id="t8" style="left:37.70px;top:277.75px;font-size:11.66px;color:#d42a4c;font-weight:400;transform:scaleX(0.8975);-webkit-text-stroke:0.2px #d42a4c;">+5V Standby</div>
<div class="t" id="t9" style="left:37.20px;top:362.95px;font-size:11.66px;color:#88c840;font-weight:400;transform:scaleX(0.9198);-webkit-text-stroke:0.2px #88c840;">Power Good</div>
<div class="t" id="t10" style="left:37.60px;top:438.95px;font-size:11.66px;color:#e08a30;font-weight:400;transform:scaleX(0.9454);-webkit-text-stroke:0.2px #e08a30;">+12V Bulk Output</div>
<div class="t" id="t11" style="left:37.20px;top:529.15px;font-size:11.66px;color:#3a3acc;font-weight:400;transform:scaleX(0.9659);-webkit-text-stroke:0.2px #3a3acc;">Bulk Output Current</div>
<div class="r" style="left:93px;top:298px;width:14px;height:11px;background:#78c030;border-radius:2px;"></div>
<div class="t" id="t12" style="left:94.50px;top:299.25px;font-size:9.01px;color:#1e3a08;font-weight:400;transform:scaleX(0.9552);-webkit-text-stroke:0.2px #1e3a08;">C4</div>
<div class="r" style="left:108px;top:298px;width:11px;height:11px;background:#3a3a3a;border-radius:2px;"></div>
<div class="r" style="left:108.3px;top:298.5px;width:10px;height:10px;background:#2a8ae0;border-radius:50%;"></div>
<div class="t" id="t13" style="left:110.80px;top:299.91px;font-size:7.95px;color:#ffffff;font-weight:400;transform:scaleX(0.9440);-webkit-text-stroke:0.2px #ffffff;">A</div>
<svg class="a" style="left:0;top:0" width="1069" height="610" viewBox="0 0 1069 610">
<path d="M100.5,298 L100.5,296 L110.5,296 L110.5,298" fill="none" stroke="#f08a22" stroke-width="1"/>
<line x1="106" y1="309" x2="106" y2="312" stroke="#f08a22" stroke-width="1"/>
</svg>
<div class="r" style="left:99.2px;top:311.7px;width:165px;height:24px;background:rgba(58,58,58,0.92);border-radius:3px;"></div>
<div class="t" id="t14" style="left:101.70px;top:314.44px;font-size:8.8px;color:#dcdcdc;font-weight:400;transform:scaleX(1.0218);-webkit-text-stroke:0.2px #dcdcdc;">Δt:</div>
<div class="t" id="t15" style="left:116.90px;top:314.44px;font-size:8.8px;color:#dcdcdc;font-weight:400;transform:scaleX(0.9138);-webkit-text-stroke:0.2px #dcdcdc;">6.38 ms</div>
<div class="t" id="t16" style="left:101.70px;top:323.74px;font-size:8.8px;color:#dcdcdc;font-weight:400;transform:scaleX(0.8649);-webkit-text-stroke:0.2px #dcdcdc;">Δv:</div>
<div class="t" id="t17" style="left:116.90px;top:323.74px;font-size:8.8px;color:#dcdcdc;font-weight:400;transform:scaleX(0.9562);-webkit-text-stroke:0.2px #dcdcdc;">10.00 V</div>
<div class="t" id="t18" style="left:189.30px;top:314.44px;font-size:8.8px;color:#dcdcdc;font-weight:400;transform:scaleX(0.9387);-webkit-text-stroke:0.2px #dcdcdc;">1/Δt:</div>
<div class="t" id="t19" style="left:212.00px;top:314.44px;font-size:8.8px;color:#dcdcdc;font-weight:400;transform:scaleX(0.9225);-webkit-text-stroke:0.2px #dcdcdc;">156.86 Hz</div>
<div class="t" id="t20" style="left:189.30px;top:323.74px;font-size:8.8px;color:#dcdcdc;font-weight:400;transform:scaleX(0.9368);-webkit-text-stroke:0.2px #dcdcdc;">Δv/Δt:</div>
<div class="t" id="t21" style="left:216.20px;top:323.74px;font-size:8.8px;color:#dcdcdc;font-weight:400;transform:scaleX(0.9482);-webkit-text-stroke:0.2px #dcdcdc;">637.49 μV/s</div>
<div class="r" style="left:45.1px;top:338.3px;width:59.6px;height:21px;background:rgba(58,58,58,0.92);border-radius:3px;"></div>
<div class="t" id="t22" style="left:47.20px;top:339.64px;font-size:8.8px;color:#dcdcdc;font-weight:400;transform:scaleX(1.0224);-webkit-text-stroke:0.2px #dcdcdc;">t:</div>
<div class="t" id="t23" style="left:57.80px;top:339.64px;font-size:8.8px;color:#dcdcdc;font-weight:400;transform:scaleX(0.8836);-webkit-text-stroke:0.2px #dcdcdc;">6.39 as</div>
<div class="t" id="t24" style="left:47.20px;top:348.14px;font-size:8.8px;color:#dcdcdc;font-weight:400;transform:scaleX(0.8037);-webkit-text-stroke:0.2px #dcdcdc;">v:</div>
<div class="t" id="t25" style="left:57.80px;top:348.14px;font-size:8.8px;color:#dcdcdc;font-weight:400;transform:scaleX(0.9042);-webkit-text-stroke:0.2px #dcdcdc;">2.00 V</div>
<div class="r" style="left:245.5px;top:384px;width:12px;height:11px;background:#3a3a3a;border-radius:2px;"></div>
<div class="r" style="left:246.1px;top:384.5px;width:10px;height:10px;background:#2a8ae0;border-radius:50%;"></div>
<div class="t" id="t26" style="left:248.60px;top:385.91px;font-size:7.95px;color:#ffffff;font-weight:400;transform:scaleX(0.9440);-webkit-text-stroke:0.2px #ffffff;">B</div>
<div class="r" style="left:257.9px;top:384px;width:13.8px;height:10.8px;background:#ec8a2a;border-radius:2px;"></div>
<div class="t" id="t27" style="left:259.50px;top:385.15px;font-size:9.01px;color:#3a2008;font-weight:400;transform:scaleX(0.9552);-webkit-text-stroke:0.2px #3a2008;">C5</div>
<div class="r" style="left:258.5px;top:397.3px;width:59.5px;height:21.2px;background:rgba(58,58,58,0.85);border-radius:3px;"></div>
<div class="t" id="t28" style="left:260.70px;top:398.64px;font-size:8.8px;color:#dcdcdc;font-weight:400;transform:scaleX(1.0224);-webkit-text-stroke:0.2px #dcdcdc;">t:</div>
<div class="t" id="t29" style="left:270.50px;top:398.64px;font-size:8.8px;color:#dcdcdc;font-weight:400;transform:scaleX(0.9106);-webkit-text-stroke:0.2px #dcdcdc;">6.38 ms</div>
<div class="t" id="t30" style="left:260.70px;top:407.64px;font-size:8.8px;color:#dcdcdc;font-weight:400;transform:scaleX(0.8037);-webkit-text-stroke:0.2px #dcdcdc;">v:</div>
<div class="t" id="t31" style="left:271.00px;top:407.64px;font-size:8.8px;color:#dcdcdc;font-weight:400;transform:scaleX(0.9232);-webkit-text-stroke:0.2px #dcdcdc;">12.00 V</div>
<svg class="a" style="left:0;top:0" width="1069" height="610" viewBox="0 0 1069 610">
<path d="M102.5,346 L109.5,353 M109.5,346 L102.5,353" stroke="#8a8a8a" stroke-width="0.9"/>
<path d="M254.5,402 L262,409.5 M262,402 L254.5,409.5" stroke="#9a9a9a" stroke-width="1"/>
</svg>
<div class="r" style="left:978px;top:24px;width:82px;height:532px;background:#2e2e2e;border-left:1px solid #3c3c3c;border-top:1px solid #5a5a5a;"></div>
<div class="t" id="t32" style="left:998.60px;top:24.84px;font-size:8.8px;color:#e4e4e4;font-weight:700;transform:scaleX(0.9386);">Add New...</div>
<div class="r" style="left:982px;top:39.3px;width:34px;height:19.7px;background:#2a2a2a;border:1px solid #484848;border-radius:3px;"></div>
<div class="r" style="left:1020.4px;top:39.3px;width:34.5px;height:19.7px;background:#2a2a2a;border:1px solid #484848;border-radius:3px;"></div>
<div class="r" style="left:982px;top:63.9px;width:34px;height:19.7px;background:#2a2a2a;border:1px solid #484848;border-radius:3px;"></div>
<div class="r" style="left:1020.4px;top:63.9px;width:34.5px;height:19.7px;background:#2a2a2a;border:1px solid #484848;border-radius:3px;"></div>
<div class="r" style="left:982px;top:88.5px;width:34px;height:20.3px;background:#2a2a2a;border:1px solid #484848;border-radius:3px;"></div>
<div class="r" style="left:1020.4px;top:88.5px;width:34.5px;height:20.3px;background:#2a2a2a;border:1px solid #484848;border-radius:3px;"></div>
<div class="t" id="t33" style="left:985.50px;top:44.16px;font-size:9.22px;color:#dedede;font-weight:400;transform:scaleX(0.8519);-webkit-text-stroke:0.2px #dedede;">Cursors</div>
<div class="t" id="t34" style="left:1028.60px;top:44.16px;font-size:9.22px;color:#dedede;font-weight:400;transform:scaleX(0.9443);-webkit-text-stroke:0.2px #dedede;">Note</div>
<div class="t" id="t35" style="left:982.70px;top:68.46px;font-size:9.22px;color:#dedede;font-weight:400;transform:scaleX(0.9003);-webkit-text-stroke:0.2px #dedede;">Measure</div>
<div class="t" id="t36" style="left:1024.90px;top:68.46px;font-size:9.22px;color:#dedede;font-weight:400;transform:scaleX(0.8693);-webkit-text-stroke:0.2px #dedede;">Search</div>
<div class="t" id="t37" style="left:986.00px;top:89.64px;font-size:8.8px;color:#dedede;font-weight:400;transform:scaleX(0.8860);-webkit-text-stroke:0.2px #dedede;">Results</div>
<div class="t" id="t38" style="left:988.80px;top:97.84px;font-size:8.8px;color:#dedede;font-weight:400;transform:scaleX(0.9510);-webkit-text-stroke:0.2px #dedede;">Table</div>
<div class="t" id="t39" style="left:1030.30px;top:93.36px;font-size:9.22px;color:#dedede;font-weight:400;transform:scaleX(0.9251);-webkit-text-stroke:0.2px #dedede;">Plot</div>
<div class="r" style="left:980px;top:113px;width:79px;height:1px;background:#444;"></div>
<div class="r" style="left:980px;top:119.1px;width:79px;height:32.7px;background:#c8c8c8;border-radius:2px;overflow:hidden;"></div>
<div class="r" style="left:980px;top:119.1px;width:79px;height:10px;background:#505050;border-radius:2px 2px 0 0;"></div>
<div class="t" id="t40" style="left:983.10px;top:119.64px;font-size:8.69px;color:#d6d6d6;font-weight:400;transform:scaleX(0.8962);-webkit-text-stroke:0.2px #d6d6d6;">Meas 1</div>
<div class="r" style="left:1044.6px;top:122.1px;width:11.4px;height:5px;background:#f0e81a;"></div>
<div class="t" id="t41" style="left:1048.50px;top:122.50px;font-size:5.3px;color:#1a1a00;font-weight:400;-webkit-text-stroke:0.2px #1a1a00;">1</div>
<div class="t" id="t42" style="left:984.10px;top:132.23px;font-size:8.59px;color:#1a1a1a;font-weight:400;transform:scaleX(0.8761);-webkit-text-stroke:0.2px #1a1a1a;">RMS</div>
<div class="t" id="t43" style="left:984.10px;top:143.33px;font-size:8.59px;color:#1a1a1a;font-weight:400;transform:scaleX(0.9905);-webkit-text-stroke:0.2px #1a1a1a;">μ': 117.4 V</div>
<div class="r" style="left:980px;top:154.8px;width:79px;height:32.7px;background:#c8c8c8;border-radius:2px;overflow:hidden;"></div>
<div class="r" style="left:980px;top:154.8px;width:79px;height:10px;background:#505050;border-radius:2px 2px 0 0;"></div>
<div class="t" id="t44" style="left:983.10px;top:155.34px;font-size:8.69px;color:#d6d6d6;font-weight:400;transform:scaleX(0.8962);-webkit-text-stroke:0.2px #d6d6d6;">Meas 2</div>
<div class="r" style="left:1044.6px;top:157.8px;width:11.4px;height:5px;background:#20c0d0;"></div>
<div class="t" id="t45" style="left:1048.50px;top:158.20px;font-size:5.3px;color:#003038;font-weight:400;-webkit-text-stroke:0.2px #003038;">2</div>
<div class="t" id="t46" style="left:984.10px;top:167.93px;font-size:8.59px;color:#1a1a1a;font-weight:400;transform:scaleX(1.0299);-webkit-text-stroke:0.2px #1a1a1a;">Maximum</div>
<div class="t" id="t47" style="left:984.10px;top:179.03px;font-size:8.59px;color:#1a1a1a;font-weight:400;transform:scaleX(1.0025);-webkit-text-stroke:0.2px #1a1a1a;">μ': 152.2 mA</div>
<div class="r" style="left:980px;top:190.5px;width:79px;height:32.7px;background:#c8c8c8;border-radius:2px;overflow:hidden;"></div>
<div class="r" style="left:980px;top:190.5px;width:79px;height:10px;background:#505050;border-radius:2px 2px 0 0;"></div>
<div class="t" id="t48" style="left:983.10px;top:191.04px;font-size:8.69px;color:#d6d6d6;font-weight:400;transform:scaleX(0.8962);-webkit-text-stroke:0.2px #d6d6d6;">Meas 3</div>
<div class="r" style="left:1044.6px;top:193.5px;width:11.4px;height:5px;background:#e02850;"></div>
<div class="t" id="t49" style="left:1048.50px;top:193.90px;font-size:5.3px;color:#3a0010;font-weight:400;-webkit-text-stroke:0.2px #3a0010;">3</div>
<div class="t" id="t50" style="left:984.10px;top:203.63px;font-size:8.59px;color:#1a1a1a;font-weight:400;transform:scaleX(1.0299);-webkit-text-stroke:0.2px #1a1a1a;">Maximum</div>
<div class="t" id="t51" style="left:984.10px;top:214.73px;font-size:8.59px;color:#1a1a1a;font-weight:400;transform:scaleX(0.9824);-webkit-text-stroke:0.2px #1a1a1a;">μ': 5.126 V</div>
<div class="r" style="left:980px;top:226.2px;width:79px;height:32.7px;background:#c8c8c8;border-radius:2px;overflow:hidden;"></div>
<div class="r" style="left:980px;top:226.2px;width:79px;height:10px;background:#505050;border-radius:2px 2px 0 0;"></div>
<div class="t" id="t52" style="left:983.10px;top:226.74px;font-size:8.69px;color:#d6d6d6;font-weight:400;transform:scaleX(0.8962);-webkit-text-stroke:0.2px #d6d6d6;">Meas 4</div>
<div class="r" style="left:1044.6px;top:229.2px;width:11.4px;height:5px;background:#80d040;"></div>
<div class="t" id="t53" style="left:1048.50px;top:229.60px;font-size:5.3px;color:#1a3a00;font-weight:400;-webkit-text-stroke:0.2px #1a3a00;">4</div>
<div class="t" id="t54" style="left:984.10px;top:239.33px;font-size:8.59px;color:#1a1a1a;font-weight:400;transform:scaleX(1.0299);-webkit-text-stroke:0.2px #1a1a1a;">Maximum</div>
<div class="t" id="t55" style="left:984.10px;top:250.43px;font-size:8.59px;color:#1a1a1a;font-weight:400;transform:scaleX(0.9824);-webkit-text-stroke:0.2px #1a1a1a;">μ': 5.173 V</div>
<div class="r" style="left:980px;top:261.9px;width:79px;height:32.7px;background:#c8c8c8;border-radius:2px;overflow:hidden;"></div>
<div class="r" style="left:980px;top:261.9px;width:79px;height:10px;background:#505050;border-radius:2px 2px 0 0;"></div>
<div class="t" id="t56" style="left:983.10px;top:262.44px;font-size:8.69px;color:#d6d6d6;font-weight:400;transform:scaleX(0.8962);-webkit-text-stroke:0.2px #d6d6d6;">Meas 5</div>
<div class="r" style="left:1044.6px;top:264.9px;width:11.4px;height:5px;background:#f08a22;"></div>
<div class="t" id="t57" style="left:1048.50px;top:265.30px;font-size:5.3px;color:#3a2000;font-weight:400;-webkit-text-stroke:0.2px #3a2000;">5</div>
<div class="t" id="t58" style="left:984.10px;top:275.03px;font-size:8.59px;color:#1a1a1a;font-weight:400;transform:scaleX(1.0299);-webkit-text-stroke:0.2px #1a1a1a;">Maximum</div>
<div class="t" id="t59" style="left:984.10px;top:286.13px;font-size:8.59px;color:#1a1a1a;font-weight:400;transform:scaleX(0.9824);-webkit-text-stroke:0.2px #1a1a1a;">μ': 12.42 V</div>
<div class="r" style="left:980px;top:297.6px;width:79px;height:32.7px;background:#c8c8c8;border-radius:2px;overflow:hidden;"></div>
<div class="r" style="left:980px;top:297.6px;width:79px;height:10px;background:#505050;border-radius:2px 2px 0 0;"></div>
<div class="t" id="t60" style="left:983.10px;top:298.14px;font-size:8.69px;color:#d6d6d6;font-weight:400;transform:scaleX(0.8962);-webkit-text-stroke:0.2px #d6d6d6;">Meas 6</div>
<div class="r" style="left:1044.6px;top:300.6px;width:11.4px;height:5px;background:#2a2ad0;border-radius:2.5px;"></div>
<div class="t" id="t61" style="left:1048.50px;top:301.00px;font-size:5.3px;color:#000040;font-weight:400;-webkit-text-stroke:0.2px #000040;">6</div>
<div class="t" id="t62" style="left:984.10px;top:310.73px;font-size:8.59px;color:#1a1a1a;font-weight:400;transform:scaleX(1.0299);-webkit-text-stroke:0.2px #1a1a1a;">Maximum</div>
<div class="t" id="t63" style="left:984.10px;top:321.83px;font-size:8.59px;color:#1a1a1a;font-weight:400;transform:scaleX(0.9824);-webkit-text-stroke:0.2px #1a1a1a;">μ': 1.332 A</div>
<div class="r" style="left:973px;top:284.0px;width:2px;height:2px;background:#bbbbbb;border-radius:50%;"></div>
<div class="r" style="left:973px;top:288.3px;width:2px;height:2px;background:#bbbbbb;border-radius:50%;"></div>
<div class="r" style="left:973px;top:292.6px;width:2px;height:2px;background:#bbbbbb;border-radius:50%;"></div>
<div class="r" style="left:980px;top:527px;width:79px;height:1px;background:#4a4a4a;"></div>
<div class="r" style="left:982.2px;top:532.5px;width:33.6px;height:19.1px;background:#2e2e2e;border:1px solid #4a4a4a;border-radius:3px;"></div>
<svg class="a" style="left:0;top:0" width="1069" height="610" viewBox="0 0 1069 610">
<path d="M992.5,543 L992.5,535.5 L1000,535.5 L1000,539" fill="none" stroke="#aaa" stroke-width="0.8" stroke-dasharray="1,1"/>
<circle cx="999.8" cy="542.5" r="2.6" fill="none" stroke="#aaa" stroke-width="1"/>
<line x1="1001.8" y1="544.5" x2="1004.5" y2="547.2" stroke="#aaa" stroke-width="1.4"/>
<path d="M1033.8,536 L1046.6,536 L1045,550 L1035.4,550 Z" fill="none" stroke="#cfcfcf" stroke-width="1"/>
<ellipse cx="1040.2" cy="536" rx="6.4" ry="1.6" fill="#2e2e2e" stroke="#cfcfcf" stroke-width="1"/>
<path d="M1037.5,539 L1038,548 M1040.2,539 L1040.2,548 M1043,539 L1042.5,548" stroke="#bfbfbf" stroke-width="0.8"/>
</svg>
<div class="r" style="left:10px;top:557px;width:49px;height:43.8px;background:#c8c8c8;border-radius:2px;"></div>
<div class="r" style="left:10px;top:557px;width:49px;height:10.2px;background:#5a5526;border-radius:2px 2px 0 0;"></div>
<div class="t" id="t64" style="left:12.90px;top:557.95px;font-size:8.9px;color:#e8e040;font-weight:400;transform:scaleX(0.8373);-webkit-text-stroke:0.2px #e8e040;">Ch 1</div>
<div class="t" id="t65" style="left:14.00px;top:570.65px;font-size:8.9px;color:#161616;font-weight:400;transform:scaleX(0.9383);-webkit-text-stroke:0.2px #161616;">50 V/div</div>
<div class="t" id="t66" style="left:14.00px;top:581.15px;font-size:8.9px;color:#161616;font-weight:400;transform:scaleX(0.9423);-webkit-text-stroke:0.2px #161616;">1 MΩ</div>
<div class="t" id="t67" style="left:14.00px;top:591.65px;font-size:8.9px;color:#161616;font-weight:400;transform:scaleX(0.9510);-webkit-text-stroke:0.2px #161616;">5 MHz</div>
<svg class="a" style="left:49px;top:590px" width="9" height="8" viewBox="0 0 9 8"><rect x="1.2" y="1.2" width="2.2" height="3.2" fill="none" stroke="#1c1c1c" stroke-width="1"/><path d="M3.6,3.5 L5.6,6.6 L7.8,3.8" fill="none" stroke="#1c1c1c" stroke-width="1.1"/></svg>
<div class="r" style="left:62px;top:557px;width:49px;height:43.8px;background:#c8c8c8;border-radius:2px;"></div>
<div class="r" style="left:62px;top:557px;width:49px;height:10.2px;background:#1c4a50;border-radius:2px 2px 0 0;"></div>
<div class="t" id="t68" style="left:64.90px;top:557.95px;font-size:8.9px;color:#30c8d0;font-weight:400;transform:scaleX(0.8373);-webkit-text-stroke:0.2px #30c8d0;">Ch 2</div>
<div class="t" id="t69" style="left:66.00px;top:570.65px;font-size:8.9px;color:#161616;font-weight:400;transform:scaleX(0.9904);-webkit-text-stroke:0.2px #161616;">2 A/div</div>
<div class="t" id="t70" style="left:66.00px;top:581.15px;font-size:8.9px;color:#161616;font-weight:400;transform:scaleX(0.9609);-webkit-text-stroke:0.2px #161616;">1 MΩ</div>
<div class="t" id="t71" style="left:66.00px;top:591.65px;font-size:8.9px;color:#161616;font-weight:400;transform:scaleX(0.9549);-webkit-text-stroke:0.2px #161616;">20 MHz</div>
<svg class="a" style="left:101px;top:590px" width="9" height="8" viewBox="0 0 9 8"><rect x="1.2" y="1.2" width="2.2" height="3.2" fill="none" stroke="#1c1c1c" stroke-width="1"/><path d="M3.6,3.5 L5.6,6.6 L7.8,3.8" fill="none" stroke="#1c1c1c" stroke-width="1.1"/></svg>
<div class="r" style="left:114px;top:557px;width:49px;height:43.8px;background:#c8c8c8;border-radius:2px;"></div>
<div class="r" style="left:114px;top:557px;width:49px;height:10.2px;background:#5a1c2c;border-radius:2px 2px 0 0;"></div>
<div class="t" id="t72" style="left:116.90px;top:557.95px;font-size:8.9px;color:#e03050;font-weight:400;transform:scaleX(0.8373);-webkit-text-stroke:0.2px #e03050;">Ch 3</div>
<div class="t" id="t73" style="left:118.00px;top:570.65px;font-size:8.9px;color:#161616;font-weight:400;transform:scaleX(0.9506);-webkit-text-stroke:0.2px #161616;">1 V/div</div>
<div class="t" id="t74" style="left:118.00px;top:591.65px;font-size:8.9px;color:#161616;font-weight:400;transform:scaleX(0.9264);-webkit-text-stroke:0.2px #161616;">100 MHz</div>
<svg class="a" style="left:153px;top:590px" width="9" height="8" viewBox="0 0 9 8"><rect x="1.2" y="1.2" width="2.2" height="3.2" fill="none" stroke="#1c1c1c" stroke-width="1"/><path d="M3.6,3.5 L5.6,6.6 L7.8,3.8" fill="none" stroke="#1c1c1c" stroke-width="1.1"/></svg>
<svg class="a" style="left:117.5px;top:580px" width="10" height="8" viewBox="0 0 10 8"><path d="M1,6 Q1,1 5,1 Q8,1 8.5,4 M3,5 L3,3 M5,5 L5,3 M7,7 L7,4" fill="none" stroke="#333" stroke-width="0.9"/></svg>
<div class="r" style="left:166px;top:557px;width:49px;height:43.8px;background:#c8c8c8;border-radius:2px;"></div>
<div class="r" style="left:166px;top:557px;width:49px;height:10.2px;background:#90d840;border-radius:2px 2px 0 0;"></div>
<div class="t" id="t75" style="left:168.90px;top:557.95px;font-size:8.9px;color:#1c3a08;font-weight:400;transform:scaleX(0.8373);-webkit-text-stroke:0.2px #1c3a08;">Ch 4</div>
<div class="t" id="t76" style="left:170.00px;top:570.65px;font-size:8.9px;color:#161616;font-weight:400;transform:scaleX(0.9248);-webkit-text-stroke:0.2px #161616;">1 V/div</div>
<div class="t" id="t77" style="left:170.00px;top:591.65px;font-size:8.9px;color:#161616;font-weight:400;transform:scaleX(0.9264);-webkit-text-stroke:0.2px #161616;">100 MHz</div>
<svg class="a" style="left:205px;top:590px" width="9" height="8" viewBox="0 0 9 8"><rect x="1.2" y="1.2" width="2.2" height="3.2" fill="none" stroke="#1c1c1c" stroke-width="1"/><path d="M3.6,3.5 L5.6,6.6 L7.8,3.8" fill="none" stroke="#1c1c1c" stroke-width="1.1"/></svg>
<svg class="a" style="left:169.5px;top:580px" width="10" height="8" viewBox="0 0 10 8"><path d="M1,6 Q1,1 5,1 Q8,1 8.5,4 M3,5 L3,3 M5,5 L5,3 M7,7 L7,4" fill="none" stroke="#333" stroke-width="0.9"/></svg>
<div class="r" style="left:218px;top:557px;width:49px;height:43.8px;background:#c8c8c8;border-radius:2px;"></div>
<div class="r" style="left:218px;top:557px;width:49px;height:10.2px;background:#5a3818;border-radius:2px 2px 0 0;"></div>
<div class="t" id="t78" style="left:220.90px;top:557.95px;font-size:8.9px;color:#f08a2a;font-weight:400;transform:scaleX(0.8373);-webkit-text-stroke:0.2px #f08a2a;">Ch 5</div>
<div class="t" id="t79" style="left:222.00px;top:570.65px;font-size:8.9px;color:#161616;font-weight:400;transform:scaleX(0.9506);-webkit-text-stroke:0.2px #161616;">2 V/div</div>
<div class="t" id="t80" style="left:222.00px;top:581.15px;font-size:8.9px;color:#161616;font-weight:400;transform:scaleX(0.9703);-webkit-text-stroke:0.2px #161616;">1 MΩ</div>
<div class="t" id="t81" style="left:222.00px;top:591.65px;font-size:8.9px;color:#161616;font-weight:400;transform:scaleX(0.9207);-webkit-text-stroke:0.2px #161616;">100 MHz</div>
<svg class="a" style="left:257px;top:590px" width="9" height="8" viewBox="0 0 9 8"><rect x="1.2" y="1.2" width="2.2" height="3.2" fill="none" stroke="#1c1c1c" stroke-width="1"/><path d="M3.6,3.5 L5.6,6.6 L7.8,3.8" fill="none" stroke="#1c1c1c" stroke-width="1.1"/></svg>
<div class="r" style="left:270px;top:557px;width:49px;height:43.8px;background:#c8c8c8;border-radius:2px;"></div>
<div class="r" style="left:270px;top:557px;width:49px;height:10.2px;background:#20204e;border-radius:2px 2px 0 0;"></div>
<div class="t" id="t82" style="left:272.90px;top:557.95px;font-size:8.9px;color:#3434d0;font-weight:400;transform:scaleX(0.8373);-webkit-text-stroke:0.2px #3434d0;">Ch 6</div>
<div class="t" id="t83" style="left:274.00px;top:570.65px;font-size:8.9px;color:#161616;font-weight:400;transform:scaleX(0.9548);-webkit-text-stroke:0.2px #161616;">500 mA/div</div>
<div class="t" id="t84" style="left:274.00px;top:581.15px;font-size:8.9px;color:#161616;font-weight:400;transform:scaleX(0.9749);-webkit-text-stroke:0.2px #161616;">1 MΩ</div>
<div class="t" id="t85" style="left:274.00px;top:591.65px;font-size:8.9px;color:#161616;font-weight:400;transform:scaleX(0.9288);-webkit-text-stroke:0.2px #161616;">50 MHz</div>
<svg class="a" style="left:309px;top:590px" width="9" height="8" viewBox="0 0 9 8"><rect x="1.2" y="1.2" width="2.2" height="3.2" fill="none" stroke="#1c1c1c" stroke-width="1"/><path d="M3.6,3.5 L5.6,6.6 L7.8,3.8" fill="none" stroke="#1c1c1c" stroke-width="1.1"/></svg>
<div class="r" style="left:495.3px;top:557.5px;width:20.8px;height:42.6px;background:#2a2a2a;border:1px solid #474747;border-radius:3px;"></div><div class="r" style="left:497.3px;top:561px;width:16.8px;height:2px;background:#c0408a;"></div>
<div class="t" id="t86" style="left:502.45px;top:571.57px;font-size:12.19px;color:#e0e0e0;font-weight:400;transform:scaleX(0.9585);-webkit-text-stroke:0.2px #e0e0e0;">7</div>
<div class="r" style="left:519.9px;top:557.5px;width:21.6px;height:42.6px;background:#2a2a2a;border:1px solid #474747;border-radius:3px;"></div><div class="r" style="left:521.9px;top:561px;width:17.6px;height:2px;background:#20b07a;"></div>
<div class="t" id="t87" style="left:527.05px;top:571.57px;font-size:12.19px;color:#e0e0e0;font-weight:400;transform:scaleX(0.9585);-webkit-text-stroke:0.2px #e0e0e0;">8</div>
<div class="r" style="left:547px;top:558px;width:1px;height:42px;background:#3a3a3a;"></div>
<div class="r" style="left:553.3px;top:557.5px;width:21.2px;height:42.6px;background:#2a2a2a;border:1px solid #474747;border-radius:3px;"></div><div class="r" style="left:555.3px;top:561px;width:17.2px;height:2px;background:#d0802a;"></div>
<div class="r" style="left:577.8px;top:557.5px;width:21.2px;height:42.6px;background:#2a2a2a;border:1px solid #474747;border-radius:3px;"></div><div class="r" style="left:579.8px;top:561px;width:17.2px;height:2px;background:#a0a0a0;"></div>
<div class="r" style="left:602.6px;top:557.5px;width:21px;height:42.6px;background:#2a2a2a;border:1px solid #474747;border-radius:3px;"></div><div class="r" style="left:604.6px;top:561px;width:17px;height:2px;background:#a040c0;"></div>
<div class="t" id="t88" style="left:556.65px;top:565.55px;font-size:9.12px;color:#dcdcdc;font-weight:400;transform:scaleX(0.8940);-webkit-text-stroke:0.2px #dcdcdc;">Add</div>
<div class="t" id="t89" style="left:556.15px;top:574.75px;font-size:9.12px;color:#dcdcdc;font-weight:400;transform:scaleX(0.8500);-webkit-text-stroke:0.2px #dcdcdc;">New</div>
<div class="t" id="t90" style="left:554.15px;top:583.95px;font-size:9.12px;color:#dcdcdc;font-weight:400;transform:scaleX(0.9622);-webkit-text-stroke:0.2px #dcdcdc;">Math</div>
<div class="t" id="t91" style="left:581.15px;top:565.55px;font-size:9.12px;color:#dcdcdc;font-weight:400;transform:scaleX(0.8940);-webkit-text-stroke:0.2px #dcdcdc;">Add</div>
<div class="t" id="t92" style="left:580.65px;top:574.75px;font-size:9.12px;color:#dcdcdc;font-weight:400;transform:scaleX(0.8500);-webkit-text-stroke:0.2px #dcdcdc;">New</div>
<div class="t" id="t93" style="left:581.90px;top:583.95px;font-size:9.12px;color:#dcdcdc;font-weight:400;transform:scaleX(0.9163);-webkit-text-stroke:0.2px #dcdcdc;">Ref</div>
<div class="t" id="t94" style="left:605.85px;top:565.55px;font-size:9.12px;color:#dcdcdc;font-weight:400;transform:scaleX(0.8940);-webkit-text-stroke:0.2px #dcdcdc;">Add</div>
<div class="t" id="t95" style="left:605.35px;top:574.75px;font-size:9.12px;color:#dcdcdc;font-weight:400;transform:scaleX(0.8500);-webkit-text-stroke:0.2px #dcdcdc;">New</div>
<div class="t" id="t96" style="left:606.35px;top:583.95px;font-size:9.12px;color:#dcdcdc;font-weight:400;transform:scaleX(0.8597);-webkit-text-stroke:0.2px #dcdcdc;">Bus</div>
<div class="r" style="left:630px;top:558px;width:1px;height:42px;background:#3a3a3a;"></div>
<div class="r" style="left:636px;top:557.5px;width:21.4px;height:42.6px;background:#2a2a2a;border:1px solid #474747;border-radius:3px;"></div><div class="r" style="left:638px;top:561px;width:17.4px;height:2px;background:#474747;"></div>
<div class="r" style="left:663.5px;top:557.5px;width:21px;height:42.6px;background:#2a2a2a;border:1px solid #474747;border-radius:3px;"></div><div class="r" style="left:665.5px;top:561px;width:17px;height:2px;background:#474747;"></div>
<div class="t" id="t97" style="left:638.10px;top:575.35px;font-size:9.12px;color:#dcdcdc;font-weight:400;transform:scaleX(0.8395);-webkit-text-stroke:0.2px #dcdcdc;">DVM</div>
<div class="t" id="t98" style="left:666.60px;top:575.35px;font-size:9.12px;color:#dcdcdc;font-weight:400;transform:scaleX(0.8007);-webkit-text-stroke:0.2px #dcdcdc;">AFG</div>
<div class="r" style="left:690.5px;top:558px;width:1px;height:42px;background:#3a3a3a;"></div>
<div class="r" style="left:696.8px;top:557.1px;width:123.3px;height:43.6px;background:#c8c8c8;border-radius:2px;"></div><div class="r" style="left:696.8px;top:557.1px;width:123.3px;height:10.1px;background:#505050;border-radius:2px 2px 0 0;"></div>
<div class="r" style="left:825.1px;top:557.1px;width:88.1px;height:43.6px;background:#c8c8c8;border-radius:2px;"></div><div class="r" style="left:825.1px;top:557.1px;width:88.1px;height:10.1px;background:#505050;border-radius:2px 2px 0 0;"></div>
<div class="r" style="left:919px;top:557.1px;width:82px;height:43.6px;background:#c8c8c8;border-radius:2px;"></div><div class="r" style="left:919px;top:557.1px;width:82px;height:10.1px;background:#505050;border-radius:2px 2px 0 0;"></div>
<div class="t" id="t99" style="left:699.80px;top:558.35px;font-size:8.9px;color:#d6d6d6;font-weight:400;transform:scaleX(0.9908);-webkit-text-stroke:0.2px #d6d6d6;">Horizontal</div>
<div class="t" id="t100" style="left:700.30px;top:569.95px;font-size:8.9px;color:#1c1c1c;font-weight:400;transform:scaleX(0.9350);-webkit-text-stroke:0.2px #1c1c1c;">4 ms/div</div>
<div class="t" id="t101" style="left:758.40px;top:569.95px;font-size:8.9px;color:#1c1c1c;font-weight:400;transform:scaleX(0.9060);-webkit-text-stroke:0.2px #1c1c1c;">40 ms</div>
<div class="t" id="t102" style="left:700.30px;top:581.15px;font-size:8.9px;color:#1c1c1c;font-weight:400;transform:scaleX(0.8640);-webkit-text-stroke:0.2px #1c1c1c;">SR: 312.5 MS/s</div>
<div class="t" id="t103" style="left:759.00px;top:581.15px;font-size:8.9px;color:#1c1c1c;font-weight:400;transform:scaleX(0.9223);-webkit-text-stroke:0.2px #1c1c1c;">3.2 ns/pt</div>
<div class="t" id="t104" style="left:700.30px;top:591.25px;font-size:8.9px;color:#1c1c1c;font-weight:400;transform:scaleX(0.9231);-webkit-text-stroke:0.2px #1c1c1c;">RL: 12.5 Mpts</div>
<div class="r" style="left:759.5px;top:592px;width:3.5px;height:5px;background:#6a5a20;"></div>
<div class="t" id="t105" style="left:769.10px;top:591.25px;font-size:8.9px;color:#1c1c1c;font-weight:400;transform:scaleX(0.9513);-webkit-text-stroke:0.2px #1c1c1c;">10%</div>
<div class="t" id="t106" style="left:828.90px;top:557.65px;font-size:8.9px;color:#d6d6d6;font-weight:400;transform:scaleX(0.9390);-webkit-text-stroke:0.2px #d6d6d6;">Trigger</div>
<div class="r" style="left:828.9px;top:570.5px;width:16.7px;height:9.3px;background:#58b848;border:1px solid #2a6a20;border-radius:4px;"></div>
<div class="t" id="t107" style="left:834.60px;top:571.55px;font-size:8.9px;color:#1c1c1c;font-weight:400;transform:scaleX(1.0127);-webkit-text-stroke:0.2px #1c1c1c;">4</div>
<svg class="a" style="left:851px;top:571px" width="10" height="9" viewBox="0 0 10 9"><path d="M0.5,1.5 L3,1.5 L7,7.5 L9.5,7.5" fill="none" stroke="#1c1c1c" stroke-width="0.9"/></svg>
<div class="t" id="t108" style="left:865.40px;top:570.05px;font-size:8.9px;color:#1c1c1c;font-weight:400;transform:scaleX(0.9604);-webkit-text-stroke:0.2px #1c1c1c;">2 V</div>
<div class="t" id="t109" style="left:922.00px;top:557.65px;font-size:8.9px;color:#d6d6d6;font-weight:400;transform:scaleX(0.9785);-webkit-text-stroke:0.2px #d6d6d6;">Acquisition</div>
<div class="t" id="t110" style="left:922.50px;top:570.75px;font-size:8.9px;color:#1c1c1c;font-weight:400;transform:scaleX(0.9887);-webkit-text-stroke:0.2px #1c1c1c;">Auto,</div>
<div class="t" id="t111" style="left:955.10px;top:570.75px;font-size:8.9px;color:#1c1c1c;font-weight:400;transform:scaleX(0.9595);-webkit-text-stroke:0.2px #1c1c1c;">Analyze</div>
<div class="t" id="t112" style="left:922.50px;top:580.55px;font-size:8.9px;color:#1c1c1c;font-weight:400;transform:scaleX(0.9306);-webkit-text-stroke:0.2px #1c1c1c;">High Res: 15 bits</div>
<div class="t" id="t113" style="left:922.50px;top:591.05px;font-size:8.9px;color:#1c1c1c;font-weight:400;transform:scaleX(0.9177);-webkit-text-stroke:0.2px #1c1c1c;">Single: 1/1</div>
<div class="r" style="left:1006.4px;top:557.5px;width:48.9px;height:19.3px;background:#ee1c24;border-radius:3px;"></div>
<div class="t" id="t114" style="left:1016.80px;top:562.22px;font-size:8.27px;color:#ffffff;font-weight:700;transform:scaleX(0.8227);">Stopped</div>
<svg class="a" style="left:0;top:0;mix-blend-mode:multiply" width="1069" height="610" viewBox="0 0 1069 610"><path d="M980.6,404.3 L1062.6,404.3 L997.2,610 L725.5,610 Z" fill="rgb(188,207,210)"/></svg>
<svg class="a" style="left:0;top:0" width="1069" height="610" viewBox="0 0 1069 610"><path d="M980.6,404.3 L1062.6,404.3 L997.2,610 L725.5,610 Z" fill="rgb(0,150,200)" fill-opacity="0.2"/><path d="M735.4,602 L999.7,602 L997.2,610 L725.5,610 Z" fill="rgb(136,181,196)"/><path d="M1060,404.3 L1062.6,404.3 L1060,412.5 Z" fill="rgb(136,181,196)"/></svg>
</body></html>
